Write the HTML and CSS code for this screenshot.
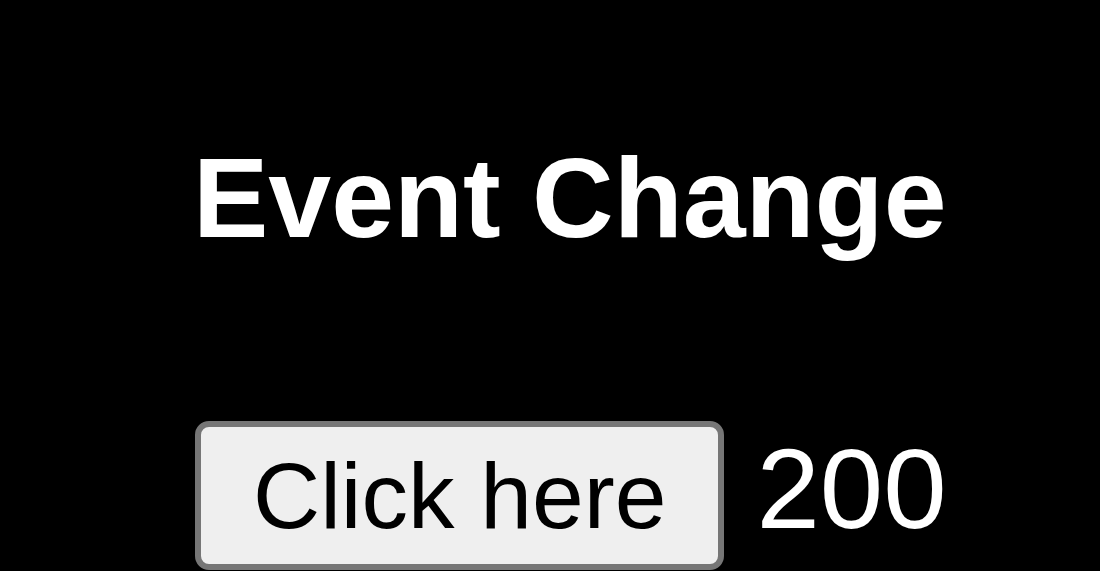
FILE: index.html
```html
<!DOCTYPE html>
<html lang="en">
<head>
  <meta charset="UTF-8">
  <meta name="viewport" content="width=device-width, initial-scale=1.0">
  <title>Event Change</title>
  <link rel="stylesheet" href="styles.css">
</head>
<body>
  <div class="stage">
    <h1 class="title">Event Change</h1>
    <div class="row">
      <button id="clickBtn" class="btn">Click here</button>
      <span id="count" class="count">200</span>
    </div>
  </div>
  <script>
    const clickBtn = document.getElementById("clickBtn");
    const count = document.getElementById("count");

    // bump the number on every click
    clickBtn.addEventListener("click", () => {
      count.textContent = Number(count.textContent) + 1;
    });
  </script>
</body>
</html>
```

FILE: styles.css
```css
body {
  margin: 0;
  padding: 0;
  min-height: 582px;
  background: #fff;
  font-family: "Liberation Sans", Arial, sans-serif;
}

.stage {
  box-sizing: border-box;
  height: 571px;
  padding: 133px 0 0 193px;
  background: #000;
  color: #fff;
  overflow: hidden;
}

.title {
  margin: 0;
  font-size: 113px;
  line-height: 131px;
  font-weight: bold;
}

.row {
  display: flex;
  align-items: baseline;
  gap: 32px;
  margin-top: 157px;
  margin-left: 2px;
}

.btn {
  font-family: "Liberation Sans", Arial, sans-serif;
  font-size: 93px;
  line-height: normal;
  color: #000;
  background: #efefef;
  border: 6px solid #767676;
  border-radius: 14px;
  padding: 16px 52px 14px;
  cursor: pointer;
}

.count {
  font-size: 114px;
  line-height: 1;
}
```
